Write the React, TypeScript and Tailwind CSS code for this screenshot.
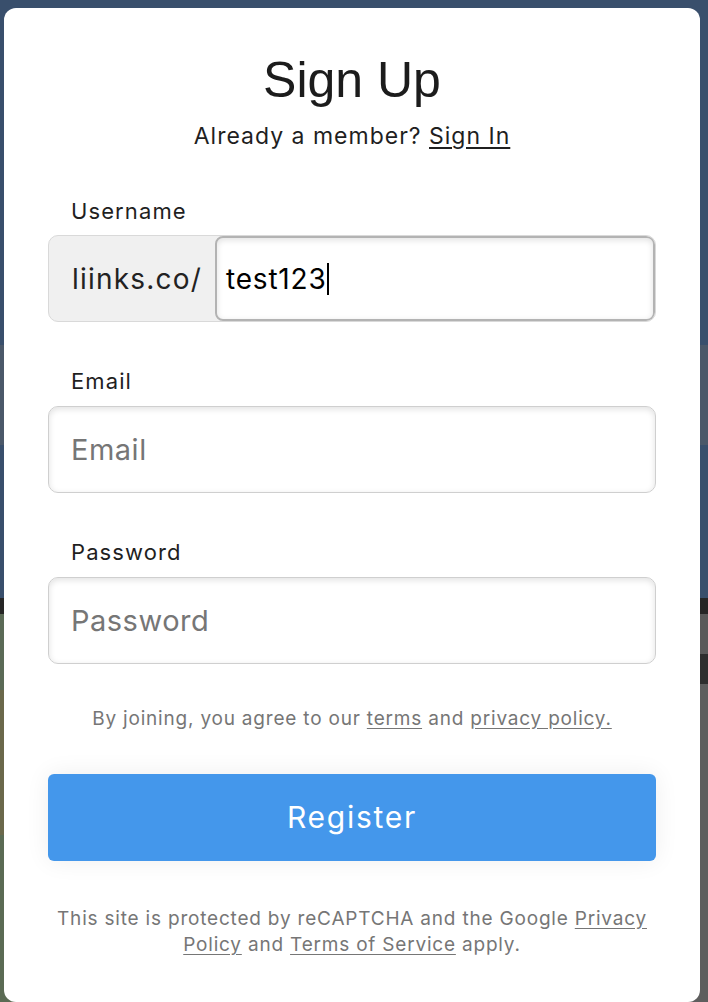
import React from "react";

const geo = { fontFamily: "Inter, Lato, sans-serif" };

export default function App() {
  return (
    <div className="relative w-[708px] h-[1002px] overflow-hidden bg-[#384e6b]">
      {/* page behind the modal */}
      <div className="flex flex-col w-full h-full">
        <div className="h-[345px] bg-[#394f6c]" />
        <div className="h-[100px] bg-[#4b5869]" />
        <div className="h-[153px] bg-[#394f6c]" />
        <div className="h-[16px] bg-[#262626]" />
        <div className="flex flex-1">
          <div className="flex flex-col w-[40px]">
            <div className="h-[76px] bg-[#5b6a56]" />
            <div className="h-[145px] bg-[#6b684b]" />
            <div className="flex-1 bg-[#5b6b54]" />
          </div>
          <div className="flex-1" />
          <div className="flex flex-col w-[40px]">
            <div className="h-[40px] bg-[#5a5a5a]" />
            <div className="h-[30px] bg-[#2e2e2e]" />
            <div className="flex-1 bg-[#5e5e5e]" />
          </div>
        </div>
      </div>

      {/* modal */}
      <div
        className="absolute left-[4px] top-[8px] w-[696px] h-[994px] rounded-[12px] bg-white flex flex-col px-[44px] pt-[47px] text-[#1f1f1f]"
        style={geo}
      >
        <h1
          className="text-center text-[50px] leading-none text-[#1c1c1c]"
          style={{ fontFamily: "'Liberation Sans', Arial, sans-serif" }}
        >
          Sign Up
        </h1>
        <p className="mt-[17px] text-center text-[23px] leading-[28px] tracking-[1px] text-[#1f1f1f]">
          Already a member? <span className="underline underline-offset-[3px]">Sign In</span>
        </p>

        <label className="mt-[48px] ml-[23px] text-[22px] leading-[26px] tracking-[1.1px]">Username</label>
        <div className="mt-[11px] flex h-[87px] rounded-[10px] border border-[#d9d9d9] bg-[#f0f0f0] overflow-hidden">
          <div className="w-[166px] shrink-0 flex items-center pl-[23px] text-[28px] tracking-[1.2px] text-[#222]">
            liinks.co/
          </div>
          <div className="flex-1 flex items-center rounded-[8px] border-2 border-[#b3b3b3] bg-white shadow-[inset_0_2px_6px_rgba(0,0,0,0.12)] pl-[9px] text-[28px] tracking-[0.8px] text-black">
            test123
            <span className="inline-block w-[2px] h-[32px] bg-black" />
          </div>
        </div>

        <label className="mt-[46px] ml-[23px] text-[22px] leading-[26px] tracking-[1.1px]">Email</label>
        <input
          readOnly
          placeholder="Email"
          className="mt-[12px] h-[87px] rounded-[10px] border border-[#cfcfcf] bg-white shadow-[inset_0_2px_6px_rgba(0,0,0,0.12)] px-[22px] text-[29px] tracking-[0.5px] outline-none placeholder:text-[#767676]"
          style={geo}
        />

        <label className="mt-[46px] ml-[23px] text-[22px] leading-[26px] tracking-[1.1px]">Password</label>
        <input
          readOnly
          placeholder="Password"
          className="mt-[12px] h-[87px] rounded-[10px] border border-[#cfcfcf] bg-white shadow-[inset_0_2px_6px_rgba(0,0,0,0.12)] px-[22px] text-[29px] tracking-[0.5px] outline-none placeholder:text-[#767676]"
          style={geo}
        />

        <p className="mt-[42px] text-center text-[19px] leading-[26px] tracking-[0.8px] text-[#767676]">
          By joining, you agree to our <span className="underline underline-offset-[3px]">terms</span> and{" "}
          <span className="underline underline-offset-[3px]">privacy policy.</span>
        </p>

        <button
          className="mt-[42px] h-[87px] rounded-[6px] bg-[#4497eb] text-white text-[30px] tracking-[1.75px] shadow-[0_0_24px_rgba(0,0,0,0.07)]"
          style={geo}
        >
          Register
        </button>

        <p className="mt-[45px] text-center text-[19px] leading-[26px] tracking-[0.8px] text-[#767676]">
          This site is protected by reCAPTCHA and the Google{" "}
          <span className="underline underline-offset-[3px]">Privacy</span>
          <br />
          <span className="underline underline-offset-[3px]">Policy</span> and{" "}
          <span className="underline underline-offset-[3px]">Terms of Service</span> apply.
        </p>
      </div>
    </div>
  );
}
